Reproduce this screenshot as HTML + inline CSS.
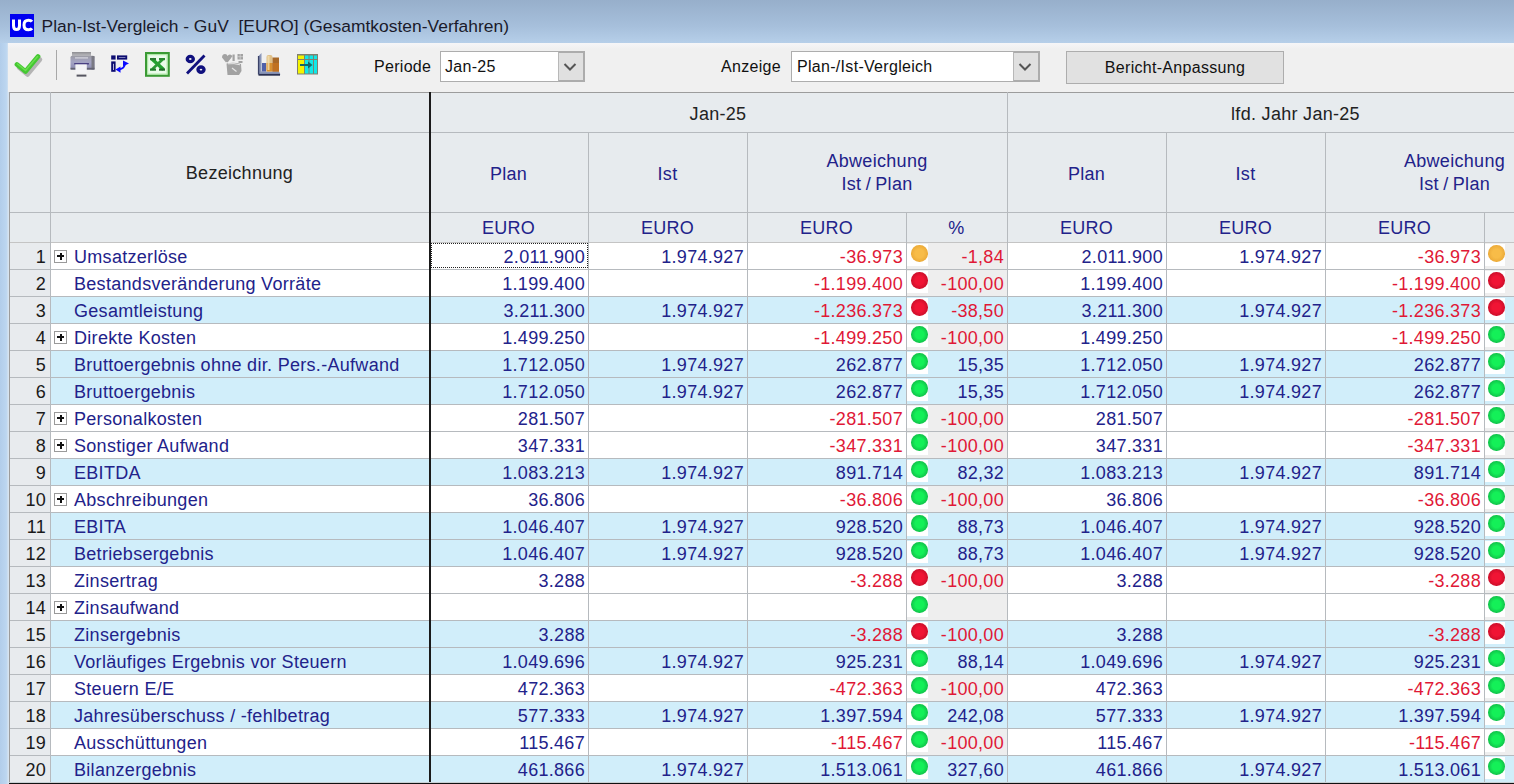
<!DOCTYPE html><html><head><meta charset="utf-8"><style>
html,body{margin:0;padding:0;}
body{width:1514px;height:784px;overflow:hidden;position:relative;background:#f0f0f0;font-family:"Liberation Sans",sans-serif;}
.t{position:absolute;white-space:nowrap;font-size:18px;letter-spacing:0.3px;}
.dot{position:absolute;width:16.5px;height:16.5px;border-radius:50%;}
</style></head><body>
<div style="position:absolute;left:0px;top:0px;width:1514px;height:43px;background:linear-gradient(#97afcb,#a6bfdb 60%,#b6cfe9)"></div>
<div style="position:absolute;left:0px;top:43px;width:9px;height:741px;background:linear-gradient(90deg,#b2cdea,#bcd6f0 70%,#dce6f0)"></div>
<div style="position:absolute;left:8px;top:43px;width:1506px;height:49px;background:linear-gradient(#f6f6f8,#f0f0f0 6px)"></div>
<div style="position:absolute;left:9px;top:92px;width:1505px;height:692px;background:#e7ebee"></div>
<div style="position:absolute;left:50px;top:242px;width:1464px;height:27px;background:#ffffff"></div>
<div style="position:absolute;left:9px;top:242px;width:41px;height:27px;background:#e8ebee"></div>
<div style="position:absolute;left:907px;top:242px;width:100px;height:27px;background:#eeeeee"></div>
<div style="position:absolute;left:1485px;top:242px;width:29px;height:27px;background:#eeeeee"></div>
<div style="position:absolute;left:907px;top:244px;width:21px;height:22px;background:#fff"></div>
<div style="position:absolute;left:1485px;top:244px;width:20px;height:22px;background:#fff"></div>
<div style="position:absolute;left:50px;top:269px;width:1464px;height:27px;background:#ffffff"></div>
<div style="position:absolute;left:9px;top:269px;width:41px;height:27px;background:#e8ebee"></div>
<div style="position:absolute;left:907px;top:269px;width:100px;height:27px;background:#eeeeee"></div>
<div style="position:absolute;left:1485px;top:269px;width:29px;height:27px;background:#eeeeee"></div>
<div style="position:absolute;left:907px;top:271px;width:21px;height:22px;background:#fff"></div>
<div style="position:absolute;left:1485px;top:271px;width:20px;height:22px;background:#fff"></div>
<div style="position:absolute;left:50px;top:296px;width:1464px;height:27px;background:#d1eefa"></div>
<div style="position:absolute;left:9px;top:296px;width:41px;height:27px;background:#e8ebee"></div>
<div style="position:absolute;left:907px;top:296px;width:100px;height:27px;background:#d1eefa"></div>
<div style="position:absolute;left:1485px;top:296px;width:29px;height:27px;background:#d1eefa"></div>
<div style="position:absolute;left:907px;top:298px;width:21px;height:22px;background:#fff"></div>
<div style="position:absolute;left:1485px;top:298px;width:20px;height:22px;background:#fff"></div>
<div style="position:absolute;left:50px;top:323px;width:1464px;height:27px;background:#ffffff"></div>
<div style="position:absolute;left:9px;top:323px;width:41px;height:27px;background:#e8ebee"></div>
<div style="position:absolute;left:907px;top:323px;width:100px;height:27px;background:#eeeeee"></div>
<div style="position:absolute;left:1485px;top:323px;width:29px;height:27px;background:#eeeeee"></div>
<div style="position:absolute;left:907px;top:325px;width:21px;height:22px;background:#fff"></div>
<div style="position:absolute;left:1485px;top:325px;width:20px;height:22px;background:#fff"></div>
<div style="position:absolute;left:50px;top:350px;width:1464px;height:27px;background:#d1eefa"></div>
<div style="position:absolute;left:9px;top:350px;width:41px;height:27px;background:#e8ebee"></div>
<div style="position:absolute;left:907px;top:350px;width:100px;height:27px;background:#d1eefa"></div>
<div style="position:absolute;left:1485px;top:350px;width:29px;height:27px;background:#d1eefa"></div>
<div style="position:absolute;left:907px;top:352px;width:21px;height:22px;background:#fff"></div>
<div style="position:absolute;left:1485px;top:352px;width:20px;height:22px;background:#fff"></div>
<div style="position:absolute;left:50px;top:377px;width:1464px;height:27px;background:#d1eefa"></div>
<div style="position:absolute;left:9px;top:377px;width:41px;height:27px;background:#e8ebee"></div>
<div style="position:absolute;left:907px;top:377px;width:100px;height:27px;background:#d1eefa"></div>
<div style="position:absolute;left:1485px;top:377px;width:29px;height:27px;background:#d1eefa"></div>
<div style="position:absolute;left:907px;top:379px;width:21px;height:22px;background:#fff"></div>
<div style="position:absolute;left:1485px;top:379px;width:20px;height:22px;background:#fff"></div>
<div style="position:absolute;left:50px;top:404px;width:1464px;height:27px;background:#ffffff"></div>
<div style="position:absolute;left:9px;top:404px;width:41px;height:27px;background:#e8ebee"></div>
<div style="position:absolute;left:907px;top:404px;width:100px;height:27px;background:#eeeeee"></div>
<div style="position:absolute;left:1485px;top:404px;width:29px;height:27px;background:#eeeeee"></div>
<div style="position:absolute;left:907px;top:406px;width:21px;height:22px;background:#fff"></div>
<div style="position:absolute;left:1485px;top:406px;width:20px;height:22px;background:#fff"></div>
<div style="position:absolute;left:50px;top:431px;width:1464px;height:27px;background:#ffffff"></div>
<div style="position:absolute;left:9px;top:431px;width:41px;height:27px;background:#e8ebee"></div>
<div style="position:absolute;left:907px;top:431px;width:100px;height:27px;background:#eeeeee"></div>
<div style="position:absolute;left:1485px;top:431px;width:29px;height:27px;background:#eeeeee"></div>
<div style="position:absolute;left:907px;top:433px;width:21px;height:22px;background:#fff"></div>
<div style="position:absolute;left:1485px;top:433px;width:20px;height:22px;background:#fff"></div>
<div style="position:absolute;left:50px;top:458px;width:1464px;height:27px;background:#d1eefa"></div>
<div style="position:absolute;left:9px;top:458px;width:41px;height:27px;background:#e8ebee"></div>
<div style="position:absolute;left:907px;top:458px;width:100px;height:27px;background:#d1eefa"></div>
<div style="position:absolute;left:1485px;top:458px;width:29px;height:27px;background:#d1eefa"></div>
<div style="position:absolute;left:907px;top:460px;width:21px;height:22px;background:#fff"></div>
<div style="position:absolute;left:1485px;top:460px;width:20px;height:22px;background:#fff"></div>
<div style="position:absolute;left:50px;top:485px;width:1464px;height:27px;background:#ffffff"></div>
<div style="position:absolute;left:9px;top:485px;width:41px;height:27px;background:#e8ebee"></div>
<div style="position:absolute;left:907px;top:485px;width:100px;height:27px;background:#eeeeee"></div>
<div style="position:absolute;left:1485px;top:485px;width:29px;height:27px;background:#eeeeee"></div>
<div style="position:absolute;left:907px;top:487px;width:21px;height:22px;background:#fff"></div>
<div style="position:absolute;left:1485px;top:487px;width:20px;height:22px;background:#fff"></div>
<div style="position:absolute;left:50px;top:512px;width:1464px;height:27px;background:#d1eefa"></div>
<div style="position:absolute;left:9px;top:512px;width:41px;height:27px;background:#e8ebee"></div>
<div style="position:absolute;left:907px;top:512px;width:100px;height:27px;background:#d1eefa"></div>
<div style="position:absolute;left:1485px;top:512px;width:29px;height:27px;background:#d1eefa"></div>
<div style="position:absolute;left:907px;top:514px;width:21px;height:22px;background:#fff"></div>
<div style="position:absolute;left:1485px;top:514px;width:20px;height:22px;background:#fff"></div>
<div style="position:absolute;left:50px;top:539px;width:1464px;height:27px;background:#d1eefa"></div>
<div style="position:absolute;left:9px;top:539px;width:41px;height:27px;background:#e8ebee"></div>
<div style="position:absolute;left:907px;top:539px;width:100px;height:27px;background:#d1eefa"></div>
<div style="position:absolute;left:1485px;top:539px;width:29px;height:27px;background:#d1eefa"></div>
<div style="position:absolute;left:907px;top:541px;width:21px;height:22px;background:#fff"></div>
<div style="position:absolute;left:1485px;top:541px;width:20px;height:22px;background:#fff"></div>
<div style="position:absolute;left:50px;top:566px;width:1464px;height:27px;background:#ffffff"></div>
<div style="position:absolute;left:9px;top:566px;width:41px;height:27px;background:#e8ebee"></div>
<div style="position:absolute;left:907px;top:566px;width:100px;height:27px;background:#eeeeee"></div>
<div style="position:absolute;left:1485px;top:566px;width:29px;height:27px;background:#eeeeee"></div>
<div style="position:absolute;left:907px;top:568px;width:21px;height:22px;background:#fff"></div>
<div style="position:absolute;left:1485px;top:568px;width:20px;height:22px;background:#fff"></div>
<div style="position:absolute;left:50px;top:593px;width:1464px;height:27px;background:#ffffff"></div>
<div style="position:absolute;left:9px;top:593px;width:41px;height:27px;background:#e8ebee"></div>
<div style="position:absolute;left:907px;top:593px;width:100px;height:27px;background:#eeeeee"></div>
<div style="position:absolute;left:1485px;top:593px;width:29px;height:27px;background:#eeeeee"></div>
<div style="position:absolute;left:907px;top:595px;width:21px;height:22px;background:#fff"></div>
<div style="position:absolute;left:1485px;top:595px;width:20px;height:22px;background:#fff"></div>
<div style="position:absolute;left:50px;top:620px;width:1464px;height:27px;background:#d1eefa"></div>
<div style="position:absolute;left:9px;top:620px;width:41px;height:27px;background:#e8ebee"></div>
<div style="position:absolute;left:907px;top:620px;width:100px;height:27px;background:#d1eefa"></div>
<div style="position:absolute;left:1485px;top:620px;width:29px;height:27px;background:#d1eefa"></div>
<div style="position:absolute;left:907px;top:622px;width:21px;height:22px;background:#fff"></div>
<div style="position:absolute;left:1485px;top:622px;width:20px;height:22px;background:#fff"></div>
<div style="position:absolute;left:50px;top:647px;width:1464px;height:27px;background:#d1eefa"></div>
<div style="position:absolute;left:9px;top:647px;width:41px;height:27px;background:#e8ebee"></div>
<div style="position:absolute;left:907px;top:647px;width:100px;height:27px;background:#d1eefa"></div>
<div style="position:absolute;left:1485px;top:647px;width:29px;height:27px;background:#d1eefa"></div>
<div style="position:absolute;left:907px;top:649px;width:21px;height:22px;background:#fff"></div>
<div style="position:absolute;left:1485px;top:649px;width:20px;height:22px;background:#fff"></div>
<div style="position:absolute;left:50px;top:674px;width:1464px;height:27px;background:#ffffff"></div>
<div style="position:absolute;left:9px;top:674px;width:41px;height:27px;background:#e8ebee"></div>
<div style="position:absolute;left:907px;top:674px;width:100px;height:27px;background:#eeeeee"></div>
<div style="position:absolute;left:1485px;top:674px;width:29px;height:27px;background:#eeeeee"></div>
<div style="position:absolute;left:907px;top:676px;width:21px;height:22px;background:#fff"></div>
<div style="position:absolute;left:1485px;top:676px;width:20px;height:22px;background:#fff"></div>
<div style="position:absolute;left:50px;top:701px;width:1464px;height:27px;background:#d1eefa"></div>
<div style="position:absolute;left:9px;top:701px;width:41px;height:27px;background:#e8ebee"></div>
<div style="position:absolute;left:907px;top:701px;width:100px;height:27px;background:#d1eefa"></div>
<div style="position:absolute;left:1485px;top:701px;width:29px;height:27px;background:#d1eefa"></div>
<div style="position:absolute;left:907px;top:703px;width:21px;height:22px;background:#fff"></div>
<div style="position:absolute;left:1485px;top:703px;width:20px;height:22px;background:#fff"></div>
<div style="position:absolute;left:50px;top:728px;width:1464px;height:27px;background:#ffffff"></div>
<div style="position:absolute;left:9px;top:728px;width:41px;height:27px;background:#e8ebee"></div>
<div style="position:absolute;left:907px;top:728px;width:100px;height:27px;background:#eeeeee"></div>
<div style="position:absolute;left:1485px;top:728px;width:29px;height:27px;background:#eeeeee"></div>
<div style="position:absolute;left:907px;top:730px;width:21px;height:22px;background:#fff"></div>
<div style="position:absolute;left:1485px;top:730px;width:20px;height:22px;background:#fff"></div>
<div style="position:absolute;left:50px;top:755px;width:1464px;height:27px;background:#d1eefa"></div>
<div style="position:absolute;left:9px;top:755px;width:41px;height:27px;background:#e8ebee"></div>
<div style="position:absolute;left:907px;top:755px;width:100px;height:27px;background:#d1eefa"></div>
<div style="position:absolute;left:1485px;top:755px;width:29px;height:27px;background:#d1eefa"></div>
<div style="position:absolute;left:907px;top:757px;width:21px;height:22px;background:#fff"></div>
<div style="position:absolute;left:1485px;top:757px;width:20px;height:22px;background:#fff"></div>
<div style="position:absolute;left:9px;top:269px;width:1505px;height:1px;background:#b6babe"></div>
<div style="position:absolute;left:9px;top:296px;width:1505px;height:1px;background:#b6babe"></div>
<div style="position:absolute;left:9px;top:323px;width:1505px;height:1px;background:#b6babe"></div>
<div style="position:absolute;left:9px;top:350px;width:1505px;height:1px;background:#b6babe"></div>
<div style="position:absolute;left:9px;top:377px;width:1505px;height:1px;background:#b6babe"></div>
<div style="position:absolute;left:9px;top:404px;width:1505px;height:1px;background:#b6babe"></div>
<div style="position:absolute;left:9px;top:431px;width:1505px;height:1px;background:#b6babe"></div>
<div style="position:absolute;left:9px;top:458px;width:1505px;height:1px;background:#b6babe"></div>
<div style="position:absolute;left:9px;top:485px;width:1505px;height:1px;background:#b6babe"></div>
<div style="position:absolute;left:9px;top:512px;width:1505px;height:1px;background:#b6babe"></div>
<div style="position:absolute;left:9px;top:539px;width:1505px;height:1px;background:#b6babe"></div>
<div style="position:absolute;left:9px;top:566px;width:1505px;height:1px;background:#b6babe"></div>
<div style="position:absolute;left:9px;top:593px;width:1505px;height:1px;background:#b6babe"></div>
<div style="position:absolute;left:9px;top:620px;width:1505px;height:1px;background:#b6babe"></div>
<div style="position:absolute;left:9px;top:647px;width:1505px;height:1px;background:#b6babe"></div>
<div style="position:absolute;left:9px;top:674px;width:1505px;height:1px;background:#b6babe"></div>
<div style="position:absolute;left:9px;top:701px;width:1505px;height:1px;background:#b6babe"></div>
<div style="position:absolute;left:9px;top:728px;width:1505px;height:1px;background:#b6babe"></div>
<div style="position:absolute;left:9px;top:755px;width:1505px;height:1px;background:#b6babe"></div>
<div style="position:absolute;left:9px;top:92px;width:1505px;height:1px;background:#9c9c9c"></div>
<div style="position:absolute;left:9px;top:132px;width:1505px;height:1px;background:#b6babe"></div>
<div style="position:absolute;left:9px;top:212px;width:1505px;height:1px;background:#b6babe"></div>
<div style="position:absolute;left:9px;top:242px;width:1505px;height:1px;background:#c4c4c4"></div>
<div style="position:absolute;left:9px;top:92px;width:1px;height:692px;background:#9c9c9c"></div>
<div style="position:absolute;left:50px;top:92px;width:1px;height:692px;background:#b6babe"></div>
<div style="position:absolute;left:588px;top:132px;width:1px;height:652px;background:#b6babe"></div>
<div style="position:absolute;left:747px;top:132px;width:1px;height:652px;background:#b6babe"></div>
<div style="position:absolute;left:1166px;top:132px;width:1px;height:652px;background:#b6babe"></div>
<div style="position:absolute;left:1325px;top:132px;width:1px;height:652px;background:#b6babe"></div>
<div style="position:absolute;left:906px;top:212px;width:1px;height:572px;background:#b6babe"></div>
<div style="position:absolute;left:1484px;top:212px;width:1px;height:572px;background:#b6babe"></div>
<div style="position:absolute;left:1007px;top:92px;width:1px;height:692px;background:#b6babe"></div>
<div style="position:absolute;left:429px;top:92px;width:2px;height:692px;background:#1a1a1a"></div>
<div style="position:absolute;left:9px;top:782px;width:1505px;height:1px;background:#c8d0d4"></div>
<div style="position:absolute;left:9px;top:783px;width:1505px;height:1px;background:#111"></div>
<div class="dot" style="left:911px;top:245px;background:radial-gradient(circle at 50% 50%, #f8bc48 0, #f8bc48 35%, #e29c2c 100%)"></div>
<div class="dot" style="left:1488px;top:245px;background:radial-gradient(circle at 50% 50%, #f8bc48 0, #f8bc48 35%, #e29c2c 100%)"></div>
<div style="position:absolute;left:54px;top:250px;width:11px;height:11px;border:1px solid #9a9a9a;background:#fff"><div style="position:absolute;left:2px;top:4px;width:7px;height:2px;background:#111"></div><div style="position:absolute;left:4.5px;top:1.5px;width:2px;height:7px;background:#111"></div></div>
<div class="dot" style="left:911px;top:272px;background:radial-gradient(circle at 50% 50%, #f01434 0, #f01434 35%, #b00a22 100%)"></div>
<div class="dot" style="left:1488px;top:272px;background:radial-gradient(circle at 50% 50%, #f01434 0, #f01434 35%, #b00a22 100%)"></div>
<div class="dot" style="left:911px;top:299px;background:radial-gradient(circle at 50% 50%, #f01434 0, #f01434 35%, #b00a22 100%)"></div>
<div class="dot" style="left:1488px;top:299px;background:radial-gradient(circle at 50% 50%, #f01434 0, #f01434 35%, #b00a22 100%)"></div>
<div class="dot" style="left:911px;top:326px;background:radial-gradient(circle at 50% 50%, #14f058 0, #14f058 35%, #0e9c3e 100%)"></div>
<div class="dot" style="left:1488px;top:326px;background:radial-gradient(circle at 50% 50%, #14f058 0, #14f058 35%, #0e9c3e 100%)"></div>
<div style="position:absolute;left:54px;top:331px;width:11px;height:11px;border:1px solid #9a9a9a;background:#fff"><div style="position:absolute;left:2px;top:4px;width:7px;height:2px;background:#111"></div><div style="position:absolute;left:4.5px;top:1.5px;width:2px;height:7px;background:#111"></div></div>
<div class="dot" style="left:911px;top:353px;background:radial-gradient(circle at 50% 50%, #14f058 0, #14f058 35%, #0e9c3e 100%)"></div>
<div class="dot" style="left:1488px;top:353px;background:radial-gradient(circle at 50% 50%, #14f058 0, #14f058 35%, #0e9c3e 100%)"></div>
<div class="dot" style="left:911px;top:380px;background:radial-gradient(circle at 50% 50%, #14f058 0, #14f058 35%, #0e9c3e 100%)"></div>
<div class="dot" style="left:1488px;top:380px;background:radial-gradient(circle at 50% 50%, #14f058 0, #14f058 35%, #0e9c3e 100%)"></div>
<div class="dot" style="left:911px;top:407px;background:radial-gradient(circle at 50% 50%, #14f058 0, #14f058 35%, #0e9c3e 100%)"></div>
<div class="dot" style="left:1488px;top:407px;background:radial-gradient(circle at 50% 50%, #14f058 0, #14f058 35%, #0e9c3e 100%)"></div>
<div style="position:absolute;left:54px;top:412px;width:11px;height:11px;border:1px solid #9a9a9a;background:#fff"><div style="position:absolute;left:2px;top:4px;width:7px;height:2px;background:#111"></div><div style="position:absolute;left:4.5px;top:1.5px;width:2px;height:7px;background:#111"></div></div>
<div class="dot" style="left:911px;top:434px;background:radial-gradient(circle at 50% 50%, #14f058 0, #14f058 35%, #0e9c3e 100%)"></div>
<div class="dot" style="left:1488px;top:434px;background:radial-gradient(circle at 50% 50%, #14f058 0, #14f058 35%, #0e9c3e 100%)"></div>
<div style="position:absolute;left:54px;top:439px;width:11px;height:11px;border:1px solid #9a9a9a;background:#fff"><div style="position:absolute;left:2px;top:4px;width:7px;height:2px;background:#111"></div><div style="position:absolute;left:4.5px;top:1.5px;width:2px;height:7px;background:#111"></div></div>
<div class="dot" style="left:911px;top:461px;background:radial-gradient(circle at 50% 50%, #14f058 0, #14f058 35%, #0e9c3e 100%)"></div>
<div class="dot" style="left:1488px;top:461px;background:radial-gradient(circle at 50% 50%, #14f058 0, #14f058 35%, #0e9c3e 100%)"></div>
<div class="dot" style="left:911px;top:488px;background:radial-gradient(circle at 50% 50%, #14f058 0, #14f058 35%, #0e9c3e 100%)"></div>
<div class="dot" style="left:1488px;top:488px;background:radial-gradient(circle at 50% 50%, #14f058 0, #14f058 35%, #0e9c3e 100%)"></div>
<div style="position:absolute;left:54px;top:493px;width:11px;height:11px;border:1px solid #9a9a9a;background:#fff"><div style="position:absolute;left:2px;top:4px;width:7px;height:2px;background:#111"></div><div style="position:absolute;left:4.5px;top:1.5px;width:2px;height:7px;background:#111"></div></div>
<div class="dot" style="left:911px;top:515px;background:radial-gradient(circle at 50% 50%, #14f058 0, #14f058 35%, #0e9c3e 100%)"></div>
<div class="dot" style="left:1488px;top:515px;background:radial-gradient(circle at 50% 50%, #14f058 0, #14f058 35%, #0e9c3e 100%)"></div>
<div class="dot" style="left:911px;top:542px;background:radial-gradient(circle at 50% 50%, #14f058 0, #14f058 35%, #0e9c3e 100%)"></div>
<div class="dot" style="left:1488px;top:542px;background:radial-gradient(circle at 50% 50%, #14f058 0, #14f058 35%, #0e9c3e 100%)"></div>
<div class="dot" style="left:911px;top:569px;background:radial-gradient(circle at 50% 50%, #f01434 0, #f01434 35%, #b00a22 100%)"></div>
<div class="dot" style="left:1488px;top:569px;background:radial-gradient(circle at 50% 50%, #f01434 0, #f01434 35%, #b00a22 100%)"></div>
<div class="dot" style="left:911px;top:596px;background:radial-gradient(circle at 50% 50%, #14f058 0, #14f058 35%, #0e9c3e 100%)"></div>
<div class="dot" style="left:1488px;top:596px;background:radial-gradient(circle at 50% 50%, #14f058 0, #14f058 35%, #0e9c3e 100%)"></div>
<div style="position:absolute;left:54px;top:601px;width:11px;height:11px;border:1px solid #9a9a9a;background:#fff"><div style="position:absolute;left:2px;top:4px;width:7px;height:2px;background:#111"></div><div style="position:absolute;left:4.5px;top:1.5px;width:2px;height:7px;background:#111"></div></div>
<div class="dot" style="left:911px;top:623px;background:radial-gradient(circle at 50% 50%, #f01434 0, #f01434 35%, #b00a22 100%)"></div>
<div class="dot" style="left:1488px;top:623px;background:radial-gradient(circle at 50% 50%, #f01434 0, #f01434 35%, #b00a22 100%)"></div>
<div class="dot" style="left:911px;top:650px;background:radial-gradient(circle at 50% 50%, #14f058 0, #14f058 35%, #0e9c3e 100%)"></div>
<div class="dot" style="left:1488px;top:650px;background:radial-gradient(circle at 50% 50%, #14f058 0, #14f058 35%, #0e9c3e 100%)"></div>
<div class="dot" style="left:911px;top:677px;background:radial-gradient(circle at 50% 50%, #14f058 0, #14f058 35%, #0e9c3e 100%)"></div>
<div class="dot" style="left:1488px;top:677px;background:radial-gradient(circle at 50% 50%, #14f058 0, #14f058 35%, #0e9c3e 100%)"></div>
<div class="dot" style="left:911px;top:704px;background:radial-gradient(circle at 50% 50%, #14f058 0, #14f058 35%, #0e9c3e 100%)"></div>
<div class="dot" style="left:1488px;top:704px;background:radial-gradient(circle at 50% 50%, #14f058 0, #14f058 35%, #0e9c3e 100%)"></div>
<div class="dot" style="left:911px;top:731px;background:radial-gradient(circle at 50% 50%, #14f058 0, #14f058 35%, #0e9c3e 100%)"></div>
<div class="dot" style="left:1488px;top:731px;background:radial-gradient(circle at 50% 50%, #14f058 0, #14f058 35%, #0e9c3e 100%)"></div>
<div class="dot" style="left:911px;top:758px;background:radial-gradient(circle at 50% 50%, #14f058 0, #14f058 35%, #0e9c3e 100%)"></div>
<div class="dot" style="left:1488px;top:758px;background:radial-gradient(circle at 50% 50%, #14f058 0, #14f058 35%, #0e9c3e 100%)"></div>
<div style="position:absolute;left:431px;top:243px;width:155px;height:23px;border:1px dotted #222"></div>
<div style="position:absolute;left:440px;top:51px;width:143px;height:29px;border:1px solid #adadad;background:#fff"></div>
<div style="position:absolute;left:558px;top:51px;width:24px;height:27px;border:2px solid #acacac;border-left:1px solid #b8b8b8;background:#e0e0e0"></div>
<div style="position:absolute;left:791px;top:51px;width:246px;height:29px;border:1px solid #adadad;background:#fff"></div>
<div style="position:absolute;left:1013px;top:51px;width:24px;height:27px;border:2px solid #acacac;border-left:1px solid #b8b8b8;background:#e0e0e0"></div>
<div style="position:absolute;left:1066px;top:51px;width:216px;height:31px;border:1px solid #adadad;background:#e1e1e1"></div>
<svg style="position:absolute;left:563px;top:62px" width="14" height="10"><path d="M1.5 2 L7 7.5 L12.5 2" fill="none" stroke="#555" stroke-width="2"/></svg>
<svg style="position:absolute;left:1018px;top:62px" width="14" height="10"><path d="M1.5 2 L7 7.5 L12.5 2" fill="none" stroke="#555" stroke-width="2"/></svg>
<svg style="position:absolute;left:10px;top:14px" width="24" height="23"><rect width="24" height="23" fill="#0000f0"/><path d="M3.5 5.5 v6 q0 4 3 4 q3 0 3 -4 v-6" fill="none" stroke="#fff" stroke-width="3"/><path d="M22 7.6 q-1 -1.4 -3.5 -1.4 q-4.5 0 -4.5 4.8 q0 4.8 4.5 4.8 q2.5 0 3.5 -1.4" fill="none" stroke="#fff" stroke-width="3"/></svg>

<svg style="position:absolute;left:14px;top:52px" width="30" height="28">
 <path d="M3.5 13 L12 20 L24.5 5" fill="none" stroke="#8c8c8c" stroke-width="4.5" stroke-linecap="round" stroke-linejoin="round" opacity="0.6" transform="translate(1.5,2.5)"/>
 <path d="M3 12.5 L11.5 19.5 L24 4.5" fill="none" stroke="#44c832" stroke-width="4.8" stroke-linecap="round" stroke-linejoin="round"/>
 <path d="M3.5 12 L11.5 18.5 L23.5 4.5" fill="none" stroke="#7ae85a" stroke-width="1.5" stroke-linecap="round" stroke-linejoin="round" opacity="0.7"/>
</svg>
<div style="position:absolute;left:56px;top:50px;width:1px;height:30px;background:#a8a8a8"></div>
<svg style="position:absolute;left:69px;top:51px" width="27" height="27">
 <defs><linearGradient id="pt" x1="0" y1="0" x2="0" y2="1"><stop offset="0" stop-color="#8e8e92"/><stop offset="1" stop-color="#c4c4c8"/></linearGradient>
 <linearGradient id="pb" x1="0" y1="0" x2="0" y2="1"><stop offset="0" stop-color="#9c9ca4"/><stop offset="0.45" stop-color="#a4a4c4"/><stop offset="1" stop-color="#8a8ab0"/></linearGradient></defs>
 <rect x="3" y="1" width="19" height="4.5" fill="url(#pt)"/>
 <rect x="1.5" y="4.8" width="24" height="13.8" rx="1.5" fill="url(#pb)"/>
 <rect x="22.5" y="5" width="3" height="13.5" fill="#7a7a84"/>
 <rect x="6" y="6.3" width="13" height="1.2" fill="#d8d8e0"/>
 <rect x="5.2" y="12" width="14.7" height="1.5" fill="#4a4082"/>
 <rect x="1.5" y="16.8" width="24" height="1.8" fill="#646474"/>
 <rect x="6.4" y="13.4" width="11.4" height="9" fill="#f4f4f6"/>
 <rect x="7.6" y="23.6" width="9.8" height="2" fill="#555560"/>
</svg>
<svg style="position:absolute;left:109px;top:54px" width="22" height="20">
 <rect x="3.1" y="2.3" width="2.6" height="2.4" fill="#5050a0" stroke="#0c0c70" stroke-width="1.8"/>
 <rect x="8.9" y="2.3" width="8.4" height="2.4" fill="#c8c8e8" stroke="#0c0c70" stroke-width="1.8"/>
 <rect x="3.1" y="8.3" width="2.6" height="8.6" fill="#e0e0f0" stroke="#0c0c70" stroke-width="1.8"/>
 <path d="M16 10 Q15.5 14.5 10 15.5" fill="none" stroke="#0a0aff" stroke-width="1.8"/>
 <path d="M20 9.4 L14 6.6 L14 12.2 Z" fill="#0a0aff"/>
 <path d="M6.5 15.5 L11.5 12.4 L11.5 18.8 Z" fill="#0a0aff"/>
</svg>
<svg style="position:absolute;left:145px;top:52px" width="25" height="25">
 <rect x="1.1" y="1.1" width="22.6" height="22.6" fill="#eafbea" stroke="#3a9a34" stroke-width="2.2"/>
 <rect x="2.7" y="2.7" width="19.4" height="19.4" fill="none" stroke="#a8e8a0" stroke-width="1"/>
 <path d="M7 7 L18.5 17.5" stroke="#22a030" stroke-width="3.6"/>
 <path d="M18 7 L7 17.5" stroke="#2a9a34" stroke-width="2.6"/>
 <rect x="5" y="6" width="6" height="2.2" fill="#2a7a30"/>
 <rect x="14" y="6" width="6" height="2.2" fill="#2a8a30"/>
 <rect x="5" y="16.5" width="6" height="2.2" fill="#1f7a2a"/>
 <rect x="14" y="16.5" width="6" height="2.2" fill="#1f6a28"/>
</svg>
<svg style="position:absolute;left:184px;top:54px" width="24" height="21">
 <ellipse cx="6.3" cy="5" rx="3" ry="2.6" fill="none" stroke="#10107e" stroke-width="3.4"/>
 <ellipse cx="17" cy="15.6" rx="3" ry="2.6" fill="none" stroke="#10107e" stroke-width="3.4"/>
 <path d="M3 19.5 L20.5 1.5" stroke="#10107e" stroke-width="2.8"/>
</svg>
<svg style="position:absolute;left:221px;top:53px" width="24" height="23" fill="#a2a2a2">
 <path d="M1 4.5 Q1 1 4 1 Q6 1 6.5 3 Q7.5 1 9.5 1.5 Q11 3 9 6 L5 9.5 Z"/>
 <path d="M6 9 L11 2.5" stroke="#a2a2a2" stroke-width="1.5"/>
 <rect x="11.5" y="1.5" width="2.2" height="6.5"/>
 <rect x="16.5" y="1" width="5.5" height="5.5"/>
 <path d="M16.5 3.7 H22 M19.2 1 V6.5" stroke="#d8d8d8" stroke-width="0.7"/>
 <rect x="17.5" y="8" width="4" height="2"/>
 <path d="M5.5 10.5 Q13 9 20 11 L20.5 18 L18 22 L6.5 22 Z"/>
 <path d="M7 10.8 Q13 10 19 11.8" stroke="#e6e6e6" stroke-width="1" fill="none"/>
 <path d="M11 15 L15.5 18.5" stroke="#e6e6e6" stroke-width="1.2"/>
</svg>
<svg style="position:absolute;left:257px;top:52px" width="25" height="24">
 <path d="M1.5 22.5 L1.5 4 L4.5 1 L4.5 19.5 L22 19.5 L23.5 22.5 Z" fill="#8a96b8"/>
 <path d="M1.5 22.8 L23 22.8" stroke="#2a3050" stroke-width="1.8"/>
 <path d="M1.6 22.5 L1.6 4" stroke="#3a4268" stroke-width="1.4"/>
 <rect x="5" y="11" width="4" height="8.5" fill="#5060a8"/>
 <rect x="9.5" y="3" width="6" height="16.5" rx="2" fill="#e0c088"/>
 <rect x="9.5" y="11" width="6" height="8.5" fill="#d89030"/>
 <rect x="10.5" y="4" width="2" height="14" fill="#f4e0b0" opacity="0.8"/>
 <rect x="15.5" y="5.5" width="6.5" height="14" fill="#a86828"/>
 <rect x="15.5" y="11" width="6.5" height="8.5" fill="#c07020"/>
</svg>
<svg style="position:absolute;left:296px;top:53px" width="23" height="22">
 <rect x="1" y="1" width="21" height="20.5" fill="#808070"/>
 <rect x="2" y="2.5" width="6" height="3.5" fill="#f4f400"/>
 <rect x="2" y="7" width="6" height="13.5" fill="#f4f400"/>
 <rect x="9" y="2.5" width="3.5" height="3.5" fill="#10e8e8"/><rect x="13.5" y="2.5" width="3.5" height="3.5" fill="#10e8e8"/><rect x="18" y="2.5" width="3" height="3.5" fill="#10e8e8"/>
 <rect x="9" y="7" width="3.5" height="13.5" fill="#10e8e8"/><rect x="13.5" y="7" width="3.5" height="13.5" fill="#10e8e8"/><rect x="18" y="7" width="3" height="13.5" fill="#10e8e8"/>
 <path d="M4 12 L14 12" stroke="#106868" stroke-width="2"/>
 <path d="M12 8.5 L16.5 12 L12 15.5 Z" fill="#106868"/>
</svg>

<div class="t" style="left:9px;top:243.5px;width:37px;height:26px;line-height:26px;text-align:right;color:#1a1a1a">1</div>
<div class="t" style="left:74px;top:243.5px;width:350px;height:26px;line-height:26px;text-align:left;color:#22228a;letter-spacing:0.3px">Umsatzerlöse</div>
<div class="t" style="left:431px;top:243.5px;width:154px;height:26px;line-height:26px;text-align:right;color:#22228a;letter-spacing:0.3px">2.011.900</div>
<div class="t" style="left:588px;top:243.5px;width:156px;height:26px;line-height:26px;text-align:right;color:#22228a;letter-spacing:0.3px">1.974.927</div>
<div class="t" style="left:747px;top:243.5px;width:156px;height:26px;line-height:26px;text-align:right;color:#e01836;letter-spacing:0.3px">-36.973</div>
<div class="t" style="left:906px;top:243.5px;width:98px;height:26px;line-height:26px;text-align:right;color:#e01836;letter-spacing:0.3px">-1,84</div>
<div class="t" style="left:1007px;top:243.5px;width:156px;height:26px;line-height:26px;text-align:right;color:#22228a;letter-spacing:0.3px">2.011.900</div>
<div class="t" style="left:1166px;top:243.5px;width:156px;height:26px;line-height:26px;text-align:right;color:#22228a;letter-spacing:0.3px">1.974.927</div>
<div class="t" style="left:1325px;top:243.5px;width:156px;height:26px;line-height:26px;text-align:right;color:#e01836;letter-spacing:0.3px">-36.973</div>
<div class="t" style="left:9px;top:270.5px;width:37px;height:26px;line-height:26px;text-align:right;color:#1a1a1a">2</div>
<div class="t" style="left:74px;top:270.5px;width:350px;height:26px;line-height:26px;text-align:left;color:#22228a;letter-spacing:0.3px">Bestandsveränderung Vorräte</div>
<div class="t" style="left:431px;top:270.5px;width:154px;height:26px;line-height:26px;text-align:right;color:#22228a;letter-spacing:0.3px">1.199.400</div>
<div class="t" style="left:747px;top:270.5px;width:156px;height:26px;line-height:26px;text-align:right;color:#e01836;letter-spacing:0.3px">-1.199.400</div>
<div class="t" style="left:906px;top:270.5px;width:98px;height:26px;line-height:26px;text-align:right;color:#e01836;letter-spacing:0.3px">-100,00</div>
<div class="t" style="left:1007px;top:270.5px;width:156px;height:26px;line-height:26px;text-align:right;color:#22228a;letter-spacing:0.3px">1.199.400</div>
<div class="t" style="left:1325px;top:270.5px;width:156px;height:26px;line-height:26px;text-align:right;color:#e01836;letter-spacing:0.3px">-1.199.400</div>
<div class="t" style="left:9px;top:297.5px;width:37px;height:26px;line-height:26px;text-align:right;color:#1a1a1a">3</div>
<div class="t" style="left:74px;top:297.5px;width:350px;height:26px;line-height:26px;text-align:left;color:#22228a;letter-spacing:0.3px">Gesamtleistung</div>
<div class="t" style="left:431px;top:297.5px;width:154px;height:26px;line-height:26px;text-align:right;color:#22228a;letter-spacing:0.3px">3.211.300</div>
<div class="t" style="left:588px;top:297.5px;width:156px;height:26px;line-height:26px;text-align:right;color:#22228a;letter-spacing:0.3px">1.974.927</div>
<div class="t" style="left:747px;top:297.5px;width:156px;height:26px;line-height:26px;text-align:right;color:#e01836;letter-spacing:0.3px">-1.236.373</div>
<div class="t" style="left:906px;top:297.5px;width:98px;height:26px;line-height:26px;text-align:right;color:#e01836;letter-spacing:0.3px">-38,50</div>
<div class="t" style="left:1007px;top:297.5px;width:156px;height:26px;line-height:26px;text-align:right;color:#22228a;letter-spacing:0.3px">3.211.300</div>
<div class="t" style="left:1166px;top:297.5px;width:156px;height:26px;line-height:26px;text-align:right;color:#22228a;letter-spacing:0.3px">1.974.927</div>
<div class="t" style="left:1325px;top:297.5px;width:156px;height:26px;line-height:26px;text-align:right;color:#e01836;letter-spacing:0.3px">-1.236.373</div>
<div class="t" style="left:9px;top:324.5px;width:37px;height:26px;line-height:26px;text-align:right;color:#1a1a1a">4</div>
<div class="t" style="left:74px;top:324.5px;width:350px;height:26px;line-height:26px;text-align:left;color:#22228a;letter-spacing:0.3px">Direkte Kosten</div>
<div class="t" style="left:431px;top:324.5px;width:154px;height:26px;line-height:26px;text-align:right;color:#22228a;letter-spacing:0.3px">1.499.250</div>
<div class="t" style="left:747px;top:324.5px;width:156px;height:26px;line-height:26px;text-align:right;color:#e01836;letter-spacing:0.3px">-1.499.250</div>
<div class="t" style="left:906px;top:324.5px;width:98px;height:26px;line-height:26px;text-align:right;color:#e01836;letter-spacing:0.3px">-100,00</div>
<div class="t" style="left:1007px;top:324.5px;width:156px;height:26px;line-height:26px;text-align:right;color:#22228a;letter-spacing:0.3px">1.499.250</div>
<div class="t" style="left:1325px;top:324.5px;width:156px;height:26px;line-height:26px;text-align:right;color:#e01836;letter-spacing:0.3px">-1.499.250</div>
<div class="t" style="left:9px;top:351.5px;width:37px;height:26px;line-height:26px;text-align:right;color:#1a1a1a">5</div>
<div class="t" style="left:74px;top:351.5px;width:350px;height:26px;line-height:26px;text-align:left;color:#22228a;letter-spacing:0.3px">Bruttoergebnis ohne dir. Pers.-Aufwand</div>
<div class="t" style="left:431px;top:351.5px;width:154px;height:26px;line-height:26px;text-align:right;color:#22228a;letter-spacing:0.3px">1.712.050</div>
<div class="t" style="left:588px;top:351.5px;width:156px;height:26px;line-height:26px;text-align:right;color:#22228a;letter-spacing:0.3px">1.974.927</div>
<div class="t" style="left:747px;top:351.5px;width:156px;height:26px;line-height:26px;text-align:right;color:#22228a;letter-spacing:0.3px">262.877</div>
<div class="t" style="left:906px;top:351.5px;width:98px;height:26px;line-height:26px;text-align:right;color:#22228a;letter-spacing:0.3px">15,35</div>
<div class="t" style="left:1007px;top:351.5px;width:156px;height:26px;line-height:26px;text-align:right;color:#22228a;letter-spacing:0.3px">1.712.050</div>
<div class="t" style="left:1166px;top:351.5px;width:156px;height:26px;line-height:26px;text-align:right;color:#22228a;letter-spacing:0.3px">1.974.927</div>
<div class="t" style="left:1325px;top:351.5px;width:156px;height:26px;line-height:26px;text-align:right;color:#22228a;letter-spacing:0.3px">262.877</div>
<div class="t" style="left:9px;top:378.5px;width:37px;height:26px;line-height:26px;text-align:right;color:#1a1a1a">6</div>
<div class="t" style="left:74px;top:378.5px;width:350px;height:26px;line-height:26px;text-align:left;color:#22228a;letter-spacing:0.3px">Bruttoergebnis</div>
<div class="t" style="left:431px;top:378.5px;width:154px;height:26px;line-height:26px;text-align:right;color:#22228a;letter-spacing:0.3px">1.712.050</div>
<div class="t" style="left:588px;top:378.5px;width:156px;height:26px;line-height:26px;text-align:right;color:#22228a;letter-spacing:0.3px">1.974.927</div>
<div class="t" style="left:747px;top:378.5px;width:156px;height:26px;line-height:26px;text-align:right;color:#22228a;letter-spacing:0.3px">262.877</div>
<div class="t" style="left:906px;top:378.5px;width:98px;height:26px;line-height:26px;text-align:right;color:#22228a;letter-spacing:0.3px">15,35</div>
<div class="t" style="left:1007px;top:378.5px;width:156px;height:26px;line-height:26px;text-align:right;color:#22228a;letter-spacing:0.3px">1.712.050</div>
<div class="t" style="left:1166px;top:378.5px;width:156px;height:26px;line-height:26px;text-align:right;color:#22228a;letter-spacing:0.3px">1.974.927</div>
<div class="t" style="left:1325px;top:378.5px;width:156px;height:26px;line-height:26px;text-align:right;color:#22228a;letter-spacing:0.3px">262.877</div>
<div class="t" style="left:9px;top:405.5px;width:37px;height:26px;line-height:26px;text-align:right;color:#1a1a1a">7</div>
<div class="t" style="left:74px;top:405.5px;width:350px;height:26px;line-height:26px;text-align:left;color:#22228a;letter-spacing:0.3px">Personalkosten</div>
<div class="t" style="left:431px;top:405.5px;width:154px;height:26px;line-height:26px;text-align:right;color:#22228a;letter-spacing:0.3px">281.507</div>
<div class="t" style="left:747px;top:405.5px;width:156px;height:26px;line-height:26px;text-align:right;color:#e01836;letter-spacing:0.3px">-281.507</div>
<div class="t" style="left:906px;top:405.5px;width:98px;height:26px;line-height:26px;text-align:right;color:#e01836;letter-spacing:0.3px">-100,00</div>
<div class="t" style="left:1007px;top:405.5px;width:156px;height:26px;line-height:26px;text-align:right;color:#22228a;letter-spacing:0.3px">281.507</div>
<div class="t" style="left:1325px;top:405.5px;width:156px;height:26px;line-height:26px;text-align:right;color:#e01836;letter-spacing:0.3px">-281.507</div>
<div class="t" style="left:9px;top:432.5px;width:37px;height:26px;line-height:26px;text-align:right;color:#1a1a1a">8</div>
<div class="t" style="left:74px;top:432.5px;width:350px;height:26px;line-height:26px;text-align:left;color:#22228a;letter-spacing:0.3px">Sonstiger Aufwand</div>
<div class="t" style="left:431px;top:432.5px;width:154px;height:26px;line-height:26px;text-align:right;color:#22228a;letter-spacing:0.3px">347.331</div>
<div class="t" style="left:747px;top:432.5px;width:156px;height:26px;line-height:26px;text-align:right;color:#e01836;letter-spacing:0.3px">-347.331</div>
<div class="t" style="left:906px;top:432.5px;width:98px;height:26px;line-height:26px;text-align:right;color:#e01836;letter-spacing:0.3px">-100,00</div>
<div class="t" style="left:1007px;top:432.5px;width:156px;height:26px;line-height:26px;text-align:right;color:#22228a;letter-spacing:0.3px">347.331</div>
<div class="t" style="left:1325px;top:432.5px;width:156px;height:26px;line-height:26px;text-align:right;color:#e01836;letter-spacing:0.3px">-347.331</div>
<div class="t" style="left:9px;top:459.5px;width:37px;height:26px;line-height:26px;text-align:right;color:#1a1a1a">9</div>
<div class="t" style="left:74px;top:459.5px;width:350px;height:26px;line-height:26px;text-align:left;color:#22228a;letter-spacing:0.3px">EBITDA</div>
<div class="t" style="left:431px;top:459.5px;width:154px;height:26px;line-height:26px;text-align:right;color:#22228a;letter-spacing:0.3px">1.083.213</div>
<div class="t" style="left:588px;top:459.5px;width:156px;height:26px;line-height:26px;text-align:right;color:#22228a;letter-spacing:0.3px">1.974.927</div>
<div class="t" style="left:747px;top:459.5px;width:156px;height:26px;line-height:26px;text-align:right;color:#22228a;letter-spacing:0.3px">891.714</div>
<div class="t" style="left:906px;top:459.5px;width:98px;height:26px;line-height:26px;text-align:right;color:#22228a;letter-spacing:0.3px">82,32</div>
<div class="t" style="left:1007px;top:459.5px;width:156px;height:26px;line-height:26px;text-align:right;color:#22228a;letter-spacing:0.3px">1.083.213</div>
<div class="t" style="left:1166px;top:459.5px;width:156px;height:26px;line-height:26px;text-align:right;color:#22228a;letter-spacing:0.3px">1.974.927</div>
<div class="t" style="left:1325px;top:459.5px;width:156px;height:26px;line-height:26px;text-align:right;color:#22228a;letter-spacing:0.3px">891.714</div>
<div class="t" style="left:9px;top:486.5px;width:37px;height:26px;line-height:26px;text-align:right;color:#1a1a1a">10</div>
<div class="t" style="left:74px;top:486.5px;width:350px;height:26px;line-height:26px;text-align:left;color:#22228a;letter-spacing:0.3px">Abschreibungen</div>
<div class="t" style="left:431px;top:486.5px;width:154px;height:26px;line-height:26px;text-align:right;color:#22228a;letter-spacing:0.3px">36.806</div>
<div class="t" style="left:747px;top:486.5px;width:156px;height:26px;line-height:26px;text-align:right;color:#e01836;letter-spacing:0.3px">-36.806</div>
<div class="t" style="left:906px;top:486.5px;width:98px;height:26px;line-height:26px;text-align:right;color:#e01836;letter-spacing:0.3px">-100,00</div>
<div class="t" style="left:1007px;top:486.5px;width:156px;height:26px;line-height:26px;text-align:right;color:#22228a;letter-spacing:0.3px">36.806</div>
<div class="t" style="left:1325px;top:486.5px;width:156px;height:26px;line-height:26px;text-align:right;color:#e01836;letter-spacing:0.3px">-36.806</div>
<div class="t" style="left:9px;top:513.5px;width:37px;height:26px;line-height:26px;text-align:right;color:#1a1a1a">11</div>
<div class="t" style="left:74px;top:513.5px;width:350px;height:26px;line-height:26px;text-align:left;color:#22228a;letter-spacing:0.3px">EBITA</div>
<div class="t" style="left:431px;top:513.5px;width:154px;height:26px;line-height:26px;text-align:right;color:#22228a;letter-spacing:0.3px">1.046.407</div>
<div class="t" style="left:588px;top:513.5px;width:156px;height:26px;line-height:26px;text-align:right;color:#22228a;letter-spacing:0.3px">1.974.927</div>
<div class="t" style="left:747px;top:513.5px;width:156px;height:26px;line-height:26px;text-align:right;color:#22228a;letter-spacing:0.3px">928.520</div>
<div class="t" style="left:906px;top:513.5px;width:98px;height:26px;line-height:26px;text-align:right;color:#22228a;letter-spacing:0.3px">88,73</div>
<div class="t" style="left:1007px;top:513.5px;width:156px;height:26px;line-height:26px;text-align:right;color:#22228a;letter-spacing:0.3px">1.046.407</div>
<div class="t" style="left:1166px;top:513.5px;width:156px;height:26px;line-height:26px;text-align:right;color:#22228a;letter-spacing:0.3px">1.974.927</div>
<div class="t" style="left:1325px;top:513.5px;width:156px;height:26px;line-height:26px;text-align:right;color:#22228a;letter-spacing:0.3px">928.520</div>
<div class="t" style="left:9px;top:540.5px;width:37px;height:26px;line-height:26px;text-align:right;color:#1a1a1a">12</div>
<div class="t" style="left:74px;top:540.5px;width:350px;height:26px;line-height:26px;text-align:left;color:#22228a;letter-spacing:0.3px">Betriebsergebnis</div>
<div class="t" style="left:431px;top:540.5px;width:154px;height:26px;line-height:26px;text-align:right;color:#22228a;letter-spacing:0.3px">1.046.407</div>
<div class="t" style="left:588px;top:540.5px;width:156px;height:26px;line-height:26px;text-align:right;color:#22228a;letter-spacing:0.3px">1.974.927</div>
<div class="t" style="left:747px;top:540.5px;width:156px;height:26px;line-height:26px;text-align:right;color:#22228a;letter-spacing:0.3px">928.520</div>
<div class="t" style="left:906px;top:540.5px;width:98px;height:26px;line-height:26px;text-align:right;color:#22228a;letter-spacing:0.3px">88,73</div>
<div class="t" style="left:1007px;top:540.5px;width:156px;height:26px;line-height:26px;text-align:right;color:#22228a;letter-spacing:0.3px">1.046.407</div>
<div class="t" style="left:1166px;top:540.5px;width:156px;height:26px;line-height:26px;text-align:right;color:#22228a;letter-spacing:0.3px">1.974.927</div>
<div class="t" style="left:1325px;top:540.5px;width:156px;height:26px;line-height:26px;text-align:right;color:#22228a;letter-spacing:0.3px">928.520</div>
<div class="t" style="left:9px;top:567.5px;width:37px;height:26px;line-height:26px;text-align:right;color:#1a1a1a">13</div>
<div class="t" style="left:74px;top:567.5px;width:350px;height:26px;line-height:26px;text-align:left;color:#22228a;letter-spacing:0.3px">Zinsertrag</div>
<div class="t" style="left:431px;top:567.5px;width:154px;height:26px;line-height:26px;text-align:right;color:#22228a;letter-spacing:0.3px">3.288</div>
<div class="t" style="left:747px;top:567.5px;width:156px;height:26px;line-height:26px;text-align:right;color:#e01836;letter-spacing:0.3px">-3.288</div>
<div class="t" style="left:906px;top:567.5px;width:98px;height:26px;line-height:26px;text-align:right;color:#e01836;letter-spacing:0.3px">-100,00</div>
<div class="t" style="left:1007px;top:567.5px;width:156px;height:26px;line-height:26px;text-align:right;color:#22228a;letter-spacing:0.3px">3.288</div>
<div class="t" style="left:1325px;top:567.5px;width:156px;height:26px;line-height:26px;text-align:right;color:#e01836;letter-spacing:0.3px">-3.288</div>
<div class="t" style="left:9px;top:594.5px;width:37px;height:26px;line-height:26px;text-align:right;color:#1a1a1a">14</div>
<div class="t" style="left:74px;top:594.5px;width:350px;height:26px;line-height:26px;text-align:left;color:#22228a;letter-spacing:0.3px">Zinsaufwand</div>
<div class="t" style="left:9px;top:621.5px;width:37px;height:26px;line-height:26px;text-align:right;color:#1a1a1a">15</div>
<div class="t" style="left:74px;top:621.5px;width:350px;height:26px;line-height:26px;text-align:left;color:#22228a;letter-spacing:0.3px">Zinsergebnis</div>
<div class="t" style="left:431px;top:621.5px;width:154px;height:26px;line-height:26px;text-align:right;color:#22228a;letter-spacing:0.3px">3.288</div>
<div class="t" style="left:747px;top:621.5px;width:156px;height:26px;line-height:26px;text-align:right;color:#e01836;letter-spacing:0.3px">-3.288</div>
<div class="t" style="left:906px;top:621.5px;width:98px;height:26px;line-height:26px;text-align:right;color:#e01836;letter-spacing:0.3px">-100,00</div>
<div class="t" style="left:1007px;top:621.5px;width:156px;height:26px;line-height:26px;text-align:right;color:#22228a;letter-spacing:0.3px">3.288</div>
<div class="t" style="left:1325px;top:621.5px;width:156px;height:26px;line-height:26px;text-align:right;color:#e01836;letter-spacing:0.3px">-3.288</div>
<div class="t" style="left:9px;top:648.5px;width:37px;height:26px;line-height:26px;text-align:right;color:#1a1a1a">16</div>
<div class="t" style="left:74px;top:648.5px;width:350px;height:26px;line-height:26px;text-align:left;color:#22228a;letter-spacing:0.3px">Vorläufiges Ergebnis vor Steuern</div>
<div class="t" style="left:431px;top:648.5px;width:154px;height:26px;line-height:26px;text-align:right;color:#22228a;letter-spacing:0.3px">1.049.696</div>
<div class="t" style="left:588px;top:648.5px;width:156px;height:26px;line-height:26px;text-align:right;color:#22228a;letter-spacing:0.3px">1.974.927</div>
<div class="t" style="left:747px;top:648.5px;width:156px;height:26px;line-height:26px;text-align:right;color:#22228a;letter-spacing:0.3px">925.231</div>
<div class="t" style="left:906px;top:648.5px;width:98px;height:26px;line-height:26px;text-align:right;color:#22228a;letter-spacing:0.3px">88,14</div>
<div class="t" style="left:1007px;top:648.5px;width:156px;height:26px;line-height:26px;text-align:right;color:#22228a;letter-spacing:0.3px">1.049.696</div>
<div class="t" style="left:1166px;top:648.5px;width:156px;height:26px;line-height:26px;text-align:right;color:#22228a;letter-spacing:0.3px">1.974.927</div>
<div class="t" style="left:1325px;top:648.5px;width:156px;height:26px;line-height:26px;text-align:right;color:#22228a;letter-spacing:0.3px">925.231</div>
<div class="t" style="left:9px;top:675.5px;width:37px;height:26px;line-height:26px;text-align:right;color:#1a1a1a">17</div>
<div class="t" style="left:74px;top:675.5px;width:350px;height:26px;line-height:26px;text-align:left;color:#22228a;letter-spacing:0.3px">Steuern E/E</div>
<div class="t" style="left:431px;top:675.5px;width:154px;height:26px;line-height:26px;text-align:right;color:#22228a;letter-spacing:0.3px">472.363</div>
<div class="t" style="left:747px;top:675.5px;width:156px;height:26px;line-height:26px;text-align:right;color:#e01836;letter-spacing:0.3px">-472.363</div>
<div class="t" style="left:906px;top:675.5px;width:98px;height:26px;line-height:26px;text-align:right;color:#e01836;letter-spacing:0.3px">-100,00</div>
<div class="t" style="left:1007px;top:675.5px;width:156px;height:26px;line-height:26px;text-align:right;color:#22228a;letter-spacing:0.3px">472.363</div>
<div class="t" style="left:1325px;top:675.5px;width:156px;height:26px;line-height:26px;text-align:right;color:#e01836;letter-spacing:0.3px">-472.363</div>
<div class="t" style="left:9px;top:702.5px;width:37px;height:26px;line-height:26px;text-align:right;color:#1a1a1a">18</div>
<div class="t" style="left:74px;top:702.5px;width:350px;height:26px;line-height:26px;text-align:left;color:#22228a;letter-spacing:0.3px">Jahresüberschuss / -fehlbetrag</div>
<div class="t" style="left:431px;top:702.5px;width:154px;height:26px;line-height:26px;text-align:right;color:#22228a;letter-spacing:0.3px">577.333</div>
<div class="t" style="left:588px;top:702.5px;width:156px;height:26px;line-height:26px;text-align:right;color:#22228a;letter-spacing:0.3px">1.974.927</div>
<div class="t" style="left:747px;top:702.5px;width:156px;height:26px;line-height:26px;text-align:right;color:#22228a;letter-spacing:0.3px">1.397.594</div>
<div class="t" style="left:906px;top:702.5px;width:98px;height:26px;line-height:26px;text-align:right;color:#22228a;letter-spacing:0.3px">242,08</div>
<div class="t" style="left:1007px;top:702.5px;width:156px;height:26px;line-height:26px;text-align:right;color:#22228a;letter-spacing:0.3px">577.333</div>
<div class="t" style="left:1166px;top:702.5px;width:156px;height:26px;line-height:26px;text-align:right;color:#22228a;letter-spacing:0.3px">1.974.927</div>
<div class="t" style="left:1325px;top:702.5px;width:156px;height:26px;line-height:26px;text-align:right;color:#22228a;letter-spacing:0.3px">1.397.594</div>
<div class="t" style="left:9px;top:729.5px;width:37px;height:26px;line-height:26px;text-align:right;color:#1a1a1a">19</div>
<div class="t" style="left:74px;top:729.5px;width:350px;height:26px;line-height:26px;text-align:left;color:#22228a;letter-spacing:0.3px">Ausschüttungen</div>
<div class="t" style="left:431px;top:729.5px;width:154px;height:26px;line-height:26px;text-align:right;color:#22228a;letter-spacing:0.3px">115.467</div>
<div class="t" style="left:747px;top:729.5px;width:156px;height:26px;line-height:26px;text-align:right;color:#e01836;letter-spacing:0.3px">-115.467</div>
<div class="t" style="left:906px;top:729.5px;width:98px;height:26px;line-height:26px;text-align:right;color:#e01836;letter-spacing:0.3px">-100,00</div>
<div class="t" style="left:1007px;top:729.5px;width:156px;height:26px;line-height:26px;text-align:right;color:#22228a;letter-spacing:0.3px">115.467</div>
<div class="t" style="left:1325px;top:729.5px;width:156px;height:26px;line-height:26px;text-align:right;color:#e01836;letter-spacing:0.3px">-115.467</div>
<div class="t" style="left:9px;top:756.5px;width:37px;height:26px;line-height:26px;text-align:right;color:#1a1a1a">20</div>
<div class="t" style="left:74px;top:756.5px;width:350px;height:26px;line-height:26px;text-align:left;color:#22228a;letter-spacing:0.3px">Bilanzergebnis</div>
<div class="t" style="left:431px;top:756.5px;width:154px;height:26px;line-height:26px;text-align:right;color:#22228a;letter-spacing:0.3px">461.866</div>
<div class="t" style="left:588px;top:756.5px;width:156px;height:26px;line-height:26px;text-align:right;color:#22228a;letter-spacing:0.3px">1.974.927</div>
<div class="t" style="left:747px;top:756.5px;width:156px;height:26px;line-height:26px;text-align:right;color:#22228a;letter-spacing:0.3px">1.513.061</div>
<div class="t" style="left:906px;top:756.5px;width:98px;height:26px;line-height:26px;text-align:right;color:#22228a;letter-spacing:0.3px">327,60</div>
<div class="t" style="left:1007px;top:756.5px;width:156px;height:26px;line-height:26px;text-align:right;color:#22228a;letter-spacing:0.3px">461.866</div>
<div class="t" style="left:1166px;top:756.5px;width:156px;height:26px;line-height:26px;text-align:right;color:#22228a;letter-spacing:0.3px">1.974.927</div>
<div class="t" style="left:1325px;top:756.5px;width:156px;height:26px;line-height:26px;text-align:right;color:#22228a;letter-spacing:0.3px">1.513.061</div>
<div class="t" style="left:429px;top:94px;width:578px;height:40px;line-height:40px;text-align:center;color:#222">Jan-25</div>
<div class="t" style="left:1007px;top:94px;width:577px;height:40px;line-height:40px;text-align:center;color:#222">lfd. Jahr Jan-25</div>
<div class="t" style="left:50px;top:133px;width:379px;height:80px;line-height:80px;text-align:center;color:#222">Bezeichnung</div>
<div class="t" style="left:429px;top:134px;width:159px;height:80px;line-height:80px;text-align:center;color:#22228a">Plan</div>
<div class="t" style="left:1007px;top:134px;width:159px;height:80px;line-height:80px;text-align:center;color:#22228a">Plan</div>
<div class="t" style="left:588px;top:134px;width:159px;height:80px;line-height:80px;text-align:center;color:#22228a">Ist</div>
<div class="t" style="left:1166px;top:134px;width:159px;height:80px;line-height:80px;text-align:center;color:#22228a">Ist</div>
<div class="t" style="left:747px;top:150px;width:260px;line-height:23px;text-align:center;color:#22228a">Abweichung<br><span style="word-spacing:-1px">Ist / Plan</span></div>
<div class="t" style="left:1325px;top:150px;width:259px;line-height:23px;text-align:center;color:#22228a">Abweichung<br><span style="word-spacing:-1px">Ist / Plan</span></div>
<div class="t" style="left:429px;top:213px;width:159px;height:30px;line-height:30px;text-align:center;color:#22228a">EURO</div>
<div class="t" style="left:588px;top:213px;width:159px;height:30px;line-height:30px;text-align:center;color:#22228a">EURO</div>
<div class="t" style="left:747px;top:213px;width:159px;height:30px;line-height:30px;text-align:center;color:#22228a">EURO</div>
<div class="t" style="left:1007px;top:213px;width:159px;height:30px;line-height:30px;text-align:center;color:#22228a">EURO</div>
<div class="t" style="left:1166px;top:213px;width:159px;height:30px;line-height:30px;text-align:center;color:#22228a">EURO</div>
<div class="t" style="left:1325px;top:213px;width:159px;height:30px;line-height:30px;text-align:center;color:#22228a">EURO</div>
<div class="t" style="left:906px;top:213px;width:101px;height:30px;line-height:30px;text-align:center;color:#22228a">%</div>
<div class="t" style="left:374px;top:51px;width:60px;height:31px;line-height:31px;text-align:left;color:#111;font-size:16px">Periode</div>
<div class="t" style="left:445px;top:51px;width:100px;height:31px;line-height:31px;text-align:left;color:#111;font-size:16px">Jan-25</div>
<div class="t" style="left:721px;top:51px;width:60px;height:31px;line-height:31px;text-align:left;color:#111;font-size:16px">Anzeige</div>
<div class="t" style="left:797px;top:51px;width:200px;height:31px;line-height:31px;text-align:left;color:#111;font-size:16px">Plan-/Ist-Vergleich</div>
<div class="t" style="left:1066px;top:52px;width:218px;height:31px;line-height:31px;text-align:center;color:#111;font-size:16px">Bericht-Anpassung</div>
<div class="t" style="left:41.5px;top:14px;width:600px;height:24px;line-height:24px;text-align:left;font-size:17.4px;letter-spacing:0.03px;color:#1a1a2a">Plan-Ist-Vergleich - GuV&nbsp; [EURO] (Gesamtkosten-Verfahren)</div>
</body></html>
